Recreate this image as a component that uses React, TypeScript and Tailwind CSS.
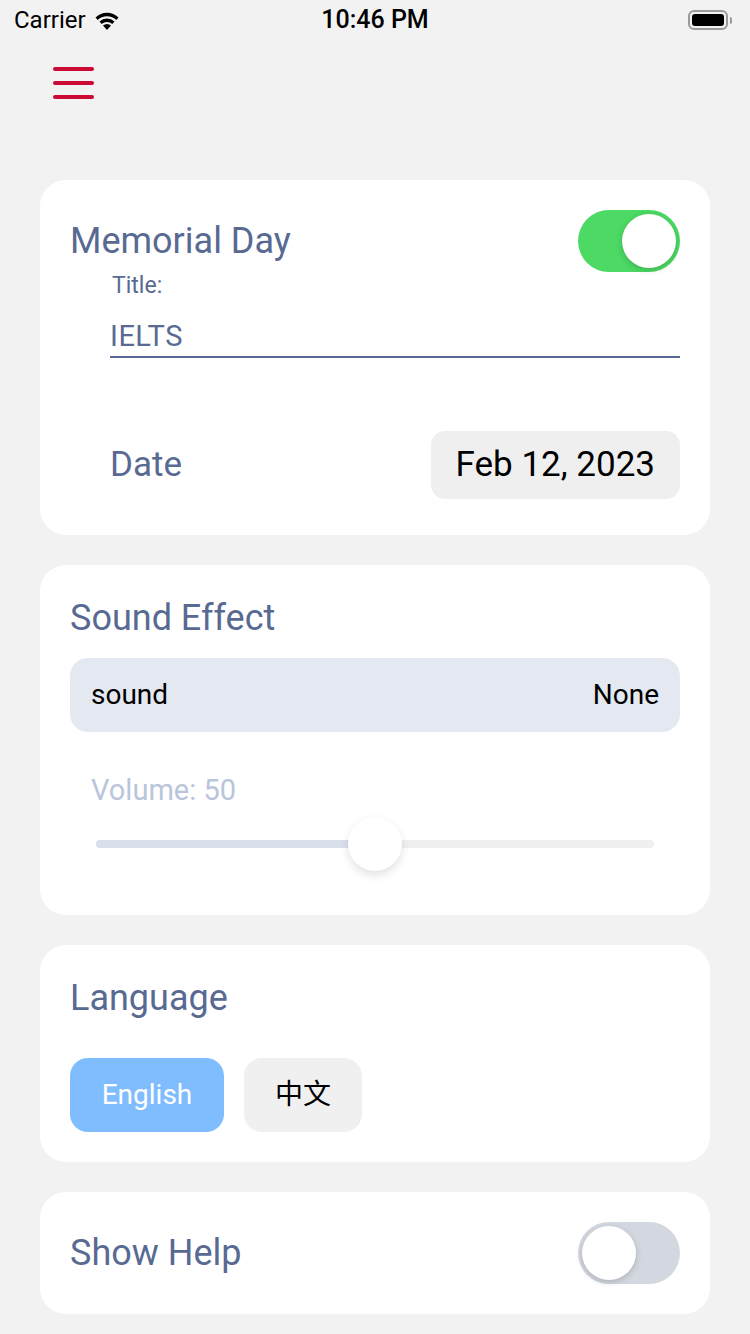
import React, { useState } from "react";

const FONT = { fontFamily: "Roboto, 'Noto Sans CJK SC', sans-serif" };

function Toggle({ on, onChange }: { on: boolean; onChange: () => void }) {
  return (
    <button
      onClick={onChange}
      className={`relative w-[102px] h-[62px] rounded-full shrink-0 ${on ? "bg-[#4cd964]" : "bg-[#d3d7df]"}`}
    >
      <span
        className={`absolute top-[4px] w-[54px] h-[54px] rounded-full bg-white shadow-[0_2px_6px_rgba(0,0,0,0.18)] ${on ? "right-[4px]" : "left-[4px]"}`}
      />
    </button>
  );
}

function StatusBar() {
  return (
    <div className="h-[40px] flex items-center justify-between px-[14px] text-black">
      <div className="flex items-center gap-[6px] w-[200px]">
        <span className="text-[24px]">Carrier</span>
        <svg width="30" height="22" viewBox="0 0 30 22">
          <path d="M15 21 L11 16.5 A6 6 0 0 1 19 16.5 Z" fill="#000" />
          <path d="M7.5 12.5 A11 11 0 0 1 22.5 12.5 L20.3 15 A8 8 0 0 0 9.7 15 Z" fill="#000" />
          <path d="M3.5 8.5 A16.5 16.5 0 0 1 26.5 8.5 L24.3 11 A13.5 13.5 0 0 0 5.7 11 Z" fill="#000" />
        </svg>
      </div>
      <span className="text-[25px] font-medium">10:46 PM</span>
      <div className="w-[200px] flex justify-end items-center gap-[2px] pr-[4px]">
        <div className="w-[40px] h-[20px] rounded-[6px] border-2 border-[#9a9a9a] p-[2px]">
          <div className="w-full h-full rounded-[3px] bg-black" />
        </div>
        <div className="w-[2px] h-[7px] rounded-r bg-[#9a9a9a]" />
      </div>
    </div>
  );
}

export default function App() {
  const [memorial, setMemorial] = useState(true);
  const [help, setHelp] = useState(false);
  const [lang, setLang] = useState<"en" | "zh">("en");
  const volume = 50;

  return (
    <div className="bg-[#f2f2f2] min-h-[1334px] w-[750px]" style={FONT}>
      <StatusBar />

      {/* Menu */}
      <div className="h-[140px] pl-[53px] pt-[27px]">
        <div className="flex flex-col gap-[10px] w-[41px]">
          <span className="h-[4px] rounded-full bg-[#cc0a36]" />
          <span className="h-[4px] rounded-full bg-[#cc0a36]" />
          <span className="h-[4px] rounded-full bg-[#cc0a36]" />
        </div>
      </div>

      <div className="px-[40px] flex flex-col gap-[30px]">
        {/* Memorial Day */}
        <div className="bg-white rounded-[26px] h-[355px] px-[30px] pt-[30px]">
          <div className="flex items-center justify-between">
            <span className="text-[36px] text-[#586a92] leading-[42px]">Memorial Day</span>
            <Toggle on={memorial} onChange={() => setMemorial(!memorial)} />
          </div>
          <div className="pl-[40px]">
            <div className="text-[23px] text-[#586a92] mt-[1px] leading-[26px] pl-[2px]">Title:</div>
            <div className="mt-[21px] border-b-2 border-[#586a92] pb-[4px] text-[29px] tracking-[0.5px] text-[#586a92] leading-[32px]">
              IELTS
            </div>
            <div className="flex items-center justify-between mt-[73px]">
              <span className="text-[35px] text-[#586a92]">Date</span>
              <div className="h-[68px] px-[25px] flex items-center rounded-[14px] bg-[#efefef] text-[35px] text-black">
                Feb 12, 2023
              </div>
            </div>
          </div>
        </div>

        {/* Sound Effect */}
        <div className="bg-white rounded-[26px] h-[350px] px-[30px] pt-[32px]">
          <div className="text-[36px] text-[#586a92] leading-[42px]">Sound Effect</div>
          <div className="mt-[19px] h-[74px] rounded-[18px] bg-[#e4e8f1] flex items-center justify-between px-[21px] text-[28px] text-black">
            <span>sound</span>
            <span>None</span>
          </div>
          <div className="mt-[42px] pl-[21px] text-[29px] text-[#b9c5db] leading-[32px]">Volume: {volume}</div>
          <div className="mt-[11px] mx-[26px] relative h-[54px] flex items-center">
            <div className="w-full h-[8px] rounded-full bg-[#f0f0f0] overflow-hidden">
              <div className="h-full bg-[#d9dfeb]" style={{ width: `${volume}%` }} />
            </div>
            <div
              className="absolute top-0 w-[54px] h-[54px] -ml-[27px] rounded-full bg-white shadow-[0_4px_10px_rgba(0,0,0,0.12)]"
              style={{ left: `${volume}%` }}
            />
          </div>
        </div>

        {/* Language */}
        <div className="bg-white rounded-[26px] h-[217px] px-[30px] pt-[32px]">
          <div className="text-[36px] text-[#586a92] leading-[42px]">Language</div>
          <div className="mt-[39px] flex gap-[20px]">
            <button
              onClick={() => setLang("en")}
              className={`h-[74px] w-[154px] rounded-[18px] text-[28px] ${lang === "en" ? "bg-[#80bdff] text-white" : "bg-[#f0f0f0] text-black"}`}
            >
              English
            </button>
            <button
              onClick={() => setLang("zh")}
              className={`h-[74px] w-[118px] rounded-[18px] text-[28px] ${lang === "zh" ? "bg-[#80bdff] text-white" : "bg-[#f0f0f0] text-black"}`}
            >
              中文
            </button>
          </div>
        </div>

        {/* Show Help */}
        <div className="bg-white rounded-[26px] h-[122px] px-[30px] flex items-center justify-between">
          <span className="text-[36px] text-[#586a92]">Show Help</span>
          <Toggle on={help} onChange={() => setHelp(!help)} />
        </div>
      </div>
    </div>
  );
}
